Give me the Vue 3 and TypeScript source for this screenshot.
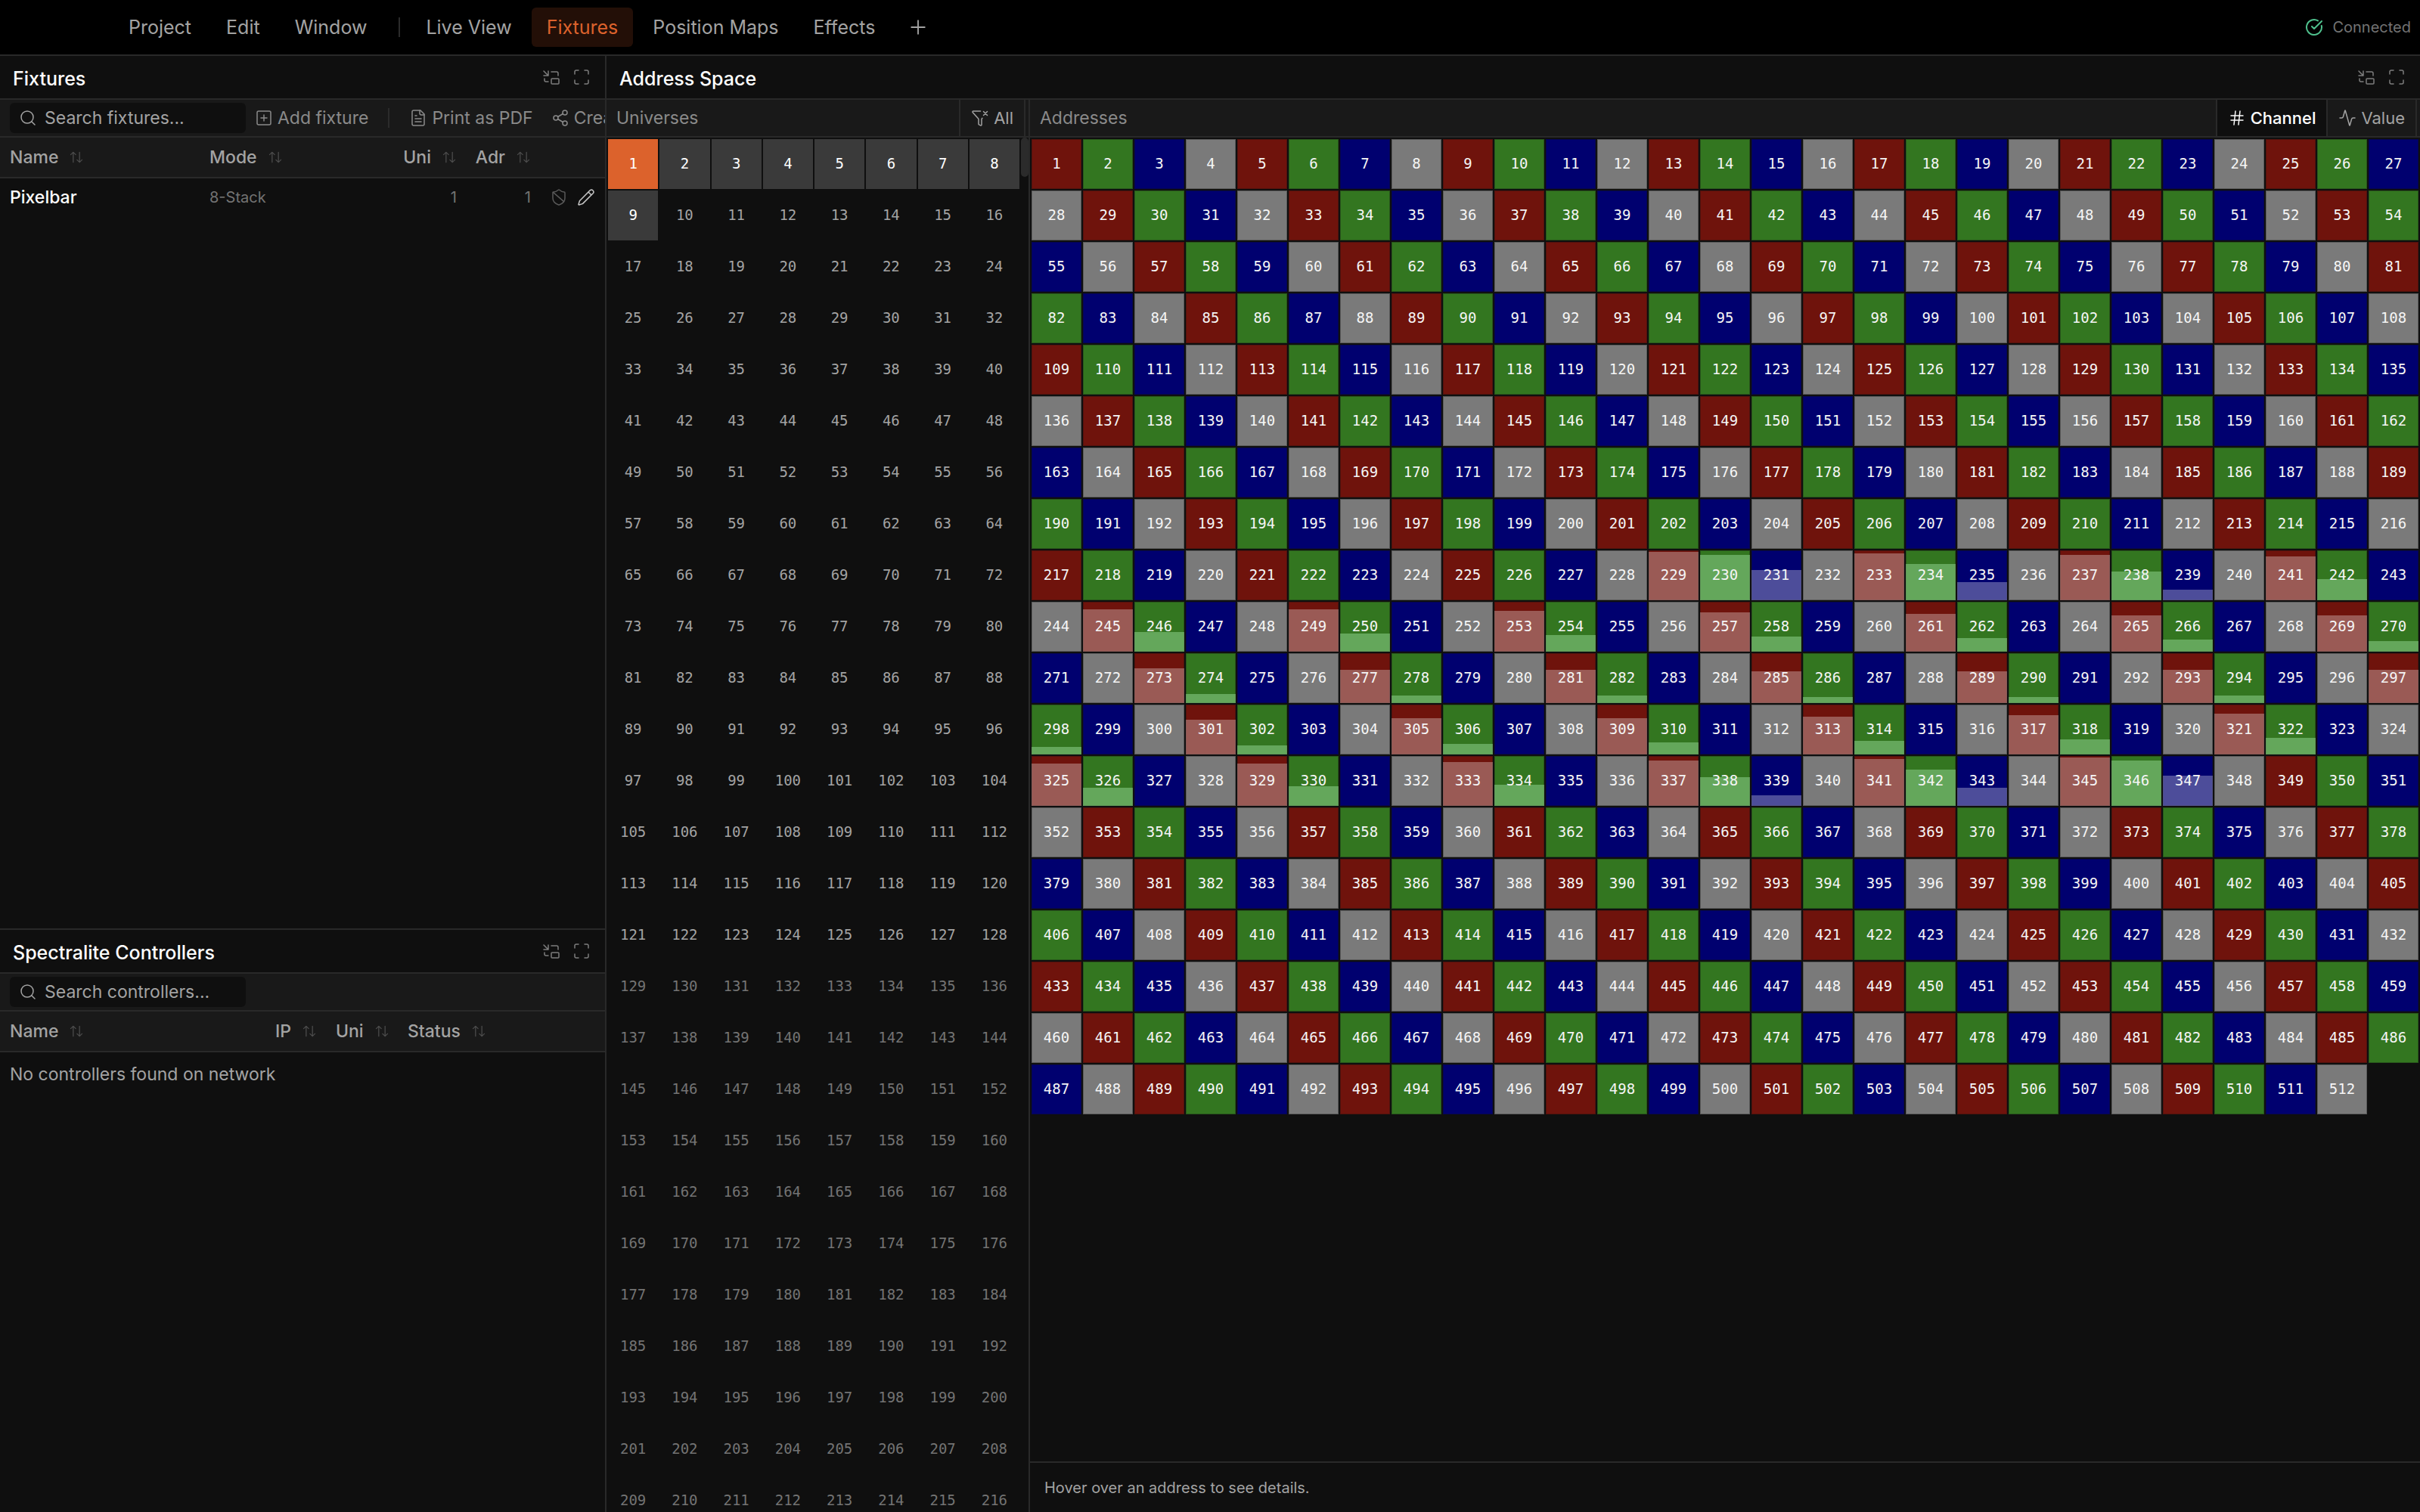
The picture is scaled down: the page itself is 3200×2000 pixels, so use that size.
<script setup lang="ts">
type Cell = { n: number; kind: string; level: number }

const icons: Record<string, string> = {
  detach: '<path d="M2 10h6V4M2 4l6 6M21 10V7a2 2 0 0 0-2-2h-7M3 14v2a2 2 0 0 0 2 2h3"/><rect x="12" y="14" width="10" height="7" rx="1"/>',
  expand: '<path d="M8 3H5a2 2 0 0 0-2 2v3M21 8V5a2 2 0 0 0-2-2h-3M3 16v3a2 2 0 0 0 2 2h3M16 21h3a2 2 0 0 0 2-2v-3"/>',
  search: '<circle cx="11" cy="11" r="8"/><path d="m21 21-4.3-4.3"/>',
  add: '<rect x="3" y="3" width="18" height="18" rx="2"/><path d="M8 12h8M12 8v8"/>',
  file: '<path d="M15 2H6a2 2 0 0 0-2 2v16a2 2 0 0 0 2 2h12a2 2 0 0 0 2-2V7Z"/><path d="M14 2v4a2 2 0 0 0 2 2h4M10 9H8M16 13H8M16 17H8"/>',
  share: '<circle cx="18" cy="5" r="3"/><circle cx="6" cy="12" r="3"/><circle cx="18" cy="19" r="3"/><path d="m8.6 13.5 6.8 4M15.4 6.5l-6.8 4"/>',
  sort: '<path d="M3 8l4-4 4 4M7 4v16M21 16l-4 4-4-4M17 20V4"/>',
  shield: '<path d="M20 13c0 5-3.5 7.5-7.66 8.95a1 1 0 0 1-.67-.01C7.5 20.5 4 18 4 13V6a1 1 0 0 1 1-1c2 0 4.500-1.200 6.240-2.720a1.170 1.170 0 0 1 1.520 0C14.510 3.810 17 5 19 5a1 1 0 0 1 1 1z"/><path d="m4.240 5.210 14.390 12.470"/>',
  pencil: '<path d="M21.170 6.810a2.820 2.820 0 0 0-3.980-3.980L3.840 16.170a2 2 0 0 0-.5.83l-1.320 4.350a.5.5 0 0 0 .62.62l4.350-1.320a2 2 0 0 0 .83-.5zM15 5l4 4"/>',
  filter: '<path d="M12.530 3H3a1 1 0 0 0-.74 1.670l7.220 7.990A2 2 0 0 1 10 14v6a1 1 0 0 0 .55.9l2 1A1 1 0 0 0 14 21v-7a2 2 0 0 1 .52-1.340l.42-.47M16.500 3.500l5 5M21.500 3.500l-5 5"/>',
  hash: '<path d="M4 9h16M4 15h16M10 3 8 21M16 3l-2 18"/>',
  wave: '<path d="M22 12h-2.480a2 2 0 0 0-1.930 1.460l-2.350 8.360a.25.25 0 0 1-.48 0L9.240 2.180a.25.25 0 0 0-.48 0l-2.350 8.360A2 2 0 0 1 4.490 12H2"/>',
  check: '<path d="M21.800 10A10 10 0 1 1 17 3.330M9 11l3 3L22 4"/>',
  plus: '<path d="M5 12h14M12 5v14"/>',
}

const menus = ['Project', 'Edit', 'Window']
const views = ['Live View', 'Fixtures', 'Position Maps', 'Effects']

const universes = Array.from({ length: 216 }, (_, i) => i + 1)
const universeClass = (n: number) =>
  n === 1 ? 'selected' : n <= 9 ? 'used' : n <= 128 ? '' : 'dim'

/* Output level of each live channel, out of 66 steps. */
const levels: Record<number, number> = {
  229: 64, 230: 60, 231: 40, 233: 62, 234: 48, 235: 24, 237: 60, 238: 38, 239: 14, 241: 58, 242: 28,
  245: 56, 246: 26, 249: 56, 250: 24, 253: 54, 254: 22, 257: 52, 258: 20, 261: 50, 262: 18,
  265: 48, 266: 16, 269: 48, 270: 14, 273: 46, 274: 12, 277: 44, 278: 10, 281: 44, 282: 10,
  285: 42, 286: 8, 289: 42, 290: 8, 293: 44, 294: 10, 297: 44, 298: 10, 301: 46, 302: 12,
  305: 48, 306: 14, 309: 48, 310: 16, 313: 50, 314: 18, 317: 52, 318: 20, 321: 54, 322: 22,
  325: 56, 326: 24, 329: 56, 330: 26, 333: 58, 334: 28, 337: 60, 338: 38, 339: 14,
  341: 62, 342: 48, 343: 24, 345: 64, 346: 60, 347: 40,
}
const kinds = ['white', 'red', 'green', 'blue']
const addresses: Cell[] = Array.from({ length: 512 }, (_, i) => ({
  n: i + 1,
  kind: kinds[(i + 1) % 4],
  level: levels[i + 1] ?? 0,
}))
</script>

<template>
  <div class="app">
    <header class="topbar">
      <nav class="menu">
        <button v-for="m in menus" :key="m" class="tab">{{ m }}</button>
        <span class="rule"></span>
        <button v-for="v in views" :key="v" class="tab" :class="{ active: v === 'Fixtures' }">{{ v }}</button>
        <button class="tab plus" aria-label="Add view"><svg class="icon" viewBox="0 0 24 24" v-html="icons.plus"></svg></button>
      </nav>
      <div class="status"><svg class="icon ok" viewBox="0 0 24 24" v-html="icons.check"></svg><span>Connected</span></div>
    </header>

    <main class="workspace">
      <div class="side">
        <section class="panel fixtures">
          <div class="panel-head">
            <h2>Fixtures</h2>
            <button class="tool" aria-label="Detach"><svg class="icon" viewBox="0 0 24 24" v-html="icons.detach"></svg></button>
            <button class="tool" aria-label="Expand"><svg class="icon" viewBox="0 0 24 24" v-html="icons.expand"></svg></button>
          </div>
          <div class="toolbar">
            <label class="search">
              <svg class="icon" viewBox="0 0 24 24" v-html="icons.search"></svg>
              <input type="text" placeholder="Search fixtures..." aria-label="Search fixtures" />
            </label>
            <button class="action"><svg class="icon" viewBox="0 0 24 24" v-html="icons.add"></svg>Add fixture</button>
            <span class="rule"></span>
            <button class="action"><svg class="icon" viewBox="0 0 24 24" v-html="icons.file"></svg>Print as PDF</button>
            <button class="action share"><svg class="icon" viewBox="0 0 24 24" v-html="icons.share"></svg>Create</button>
          </div>
          <table>
            <colgroup><col class="c-name" /><col class="c-mode" /><col class="c-uni" /><col class="c-adr" /><col /></colgroup>
            <thead>
              <tr>
                <th>Name<svg class="sort" viewBox="0 0 24 24" v-html="icons.sort"></svg></th>
                <th>Mode<svg class="sort" viewBox="0 0 24 24" v-html="icons.sort"></svg></th>
                <th class="num">Uni<svg class="sort" viewBox="0 0 24 24" v-html="icons.sort"></svg></th>
                <th class="num">Adr<svg class="sort" viewBox="0 0 24 24" v-html="icons.sort"></svg></th>
                <th></th>
              </tr>
            </thead>
            <tbody>
              <tr>
                <td class="strong">Pixelbar</td>
                <td class="small">8-Stack</td>
                <td class="small num">1</td>
                <td class="small num">1</td>
                <td class="row-icons">
                  <span>
                    <svg class="icon shield" viewBox="0 0 24 24" v-html="icons.shield"></svg>
                    <svg class="icon pencil" viewBox="0 0 24 24" v-html="icons.pencil"></svg>
                  </span>
                </td>
              </tr>
            </tbody>
          </table>
        </section>

        <section class="panel controllers">
          <div class="panel-head">
            <h2>Spectralite Controllers</h2>
            <button class="tool" aria-label="Detach"><svg class="icon" viewBox="0 0 24 24" v-html="icons.detach"></svg></button>
            <button class="tool" aria-label="Expand"><svg class="icon" viewBox="0 0 24 24" v-html="icons.expand"></svg></button>
          </div>
          <div class="toolbar">
            <label class="search">
              <svg class="icon" viewBox="0 0 24 24" v-html="icons.search"></svg>
              <input type="text" placeholder="Search controllers..." aria-label="Search controllers" />
            </label>
          </div>
          <table>
            <colgroup><col class="k-name" /><col class="k-ip" /><col class="k-uni" /><col /></colgroup>
            <thead>
              <tr>
                <th>Name<svg class="sort" viewBox="0 0 24 24" v-html="icons.sort"></svg></th>
                <th>IP<svg class="sort" viewBox="0 0 24 24" v-html="icons.sort"></svg></th>
                <th>Uni<svg class="sort" viewBox="0 0 24 24" v-html="icons.sort"></svg></th>
                <th>Status<svg class="sort" viewBox="0 0 24 24" v-html="icons.sort"></svg></th>
              </tr>
            </thead>
            <tbody>
              <tr><td colspan="4" class="empty">No controllers found on network</td></tr>
            </tbody>
          </table>
        </section>
      </div>

      <section class="panel space">
        <div class="panel-head">
          <h2>Address Space</h2>
          <button class="tool" aria-label="Detach"><svg class="icon" viewBox="0 0 24 24" v-html="icons.detach"></svg></button>
          <button class="tool" aria-label="Expand"><svg class="icon" viewBox="0 0 24 24" v-html="icons.expand"></svg></button>
        </div>
        <div class="columns">
          <div class="universes">
            <div class="toolbar split">
              <span class="label">Universes</span>
              <button class="seg all"><svg class="icon" viewBox="0 0 24 24" v-html="icons.filter"></svg>All</button>
            </div>
            <div class="scroll">
              <div class="grid eight">
                <div v-for="n in universes" :key="n" class="cell" :class="universeClass(n)">{{ n }}</div>
              </div>
              <div class="track"><div class="thumb"></div></div>
            </div>
          </div>
          <div class="addresses">
            <div class="toolbar split">
              <span class="label">Addresses</span>
              <button class="seg on"><svg class="icon" viewBox="0 0 24 24" v-html="icons.hash"></svg>Channel</button>
              <button class="seg"><svg class="icon" viewBox="0 0 24 24" v-html="icons.wave"></svg>Value</button>
            </div>
            <div class="grid many">
              <div v-for="c in addresses" :key="c.n" class="cell addr" :class="c.kind">
                <span v-if="c.level" class="level" :style="{ height: (c.level / 66) * 100 + '%' }"></span>
                <span class="no">{{ c.n }}</span>
              </div>
            </div>
            <footer class="hint">Hover over an address to see details.</footer>
          </div>
        </div>
      </section>
    </main>
  </div>
</template>

<style>
body { background: #0f0f0f; }
</style>

<style scoped>
.app {
  display: flex;
  flex-direction: column;
  height: 100vh;
  overflow: hidden;
  background: #0f0f0f;
  color: #a3a3a3;
  font-family: Inter, "Liberation Sans", sans-serif;
  font-size: 23px;
  line-height: 32px;
}
.app *, .app { box-sizing: border-box; }
button {
  margin: 0;
  border: 0;
  background: none;
  color: inherit;
  font: inherit;
  white-space: nowrap;
}
.icon {
  flex: none;
  width: 24px;
  height: 24px;
}
.icon, .sort {
  fill: none;
  stroke: currentColor;
  stroke-width: 1.5;
  stroke-linecap: round;
  stroke-linejoin: round;
}

.topbar {
  display: flex;
  flex: none;
  align-items: center;
  justify-content: space-between;
  height: 74px;
  padding: 0 12px 0 150px;
  border-bottom: 2px solid #292929;
  background: #000;
}
.menu { display: flex; align-items: center; gap: 6px; font-size: 25px; }
.tab {
  display: flex;
  align-items: center;
  height: 52px;
  padding: 0 20px;
  border-radius: 6px;
}
.tab.active { background: #230f07; color: #dc622c; }
.plus { padding: 0 16px; }
.plus .icon { width: 30px; height: 30px; }
.rule { flex: none; width: 2px; height: 26px; margin: 0 14px; background: #2b2b2b; }
.menu .rule { margin: 0 8px 0 16px; }
.status { display: flex; align-items: center; gap: 12px; color: #737373; font-size: 20px; }
.ok { color: #4fc08d; stroke-width: 2; }

.workspace { display: flex; flex: 1; min-height: 0; }
.side {
  display: flex;
  flex: 0 0 calc(25% + 2px);
  flex-direction: column;
  min-width: 0;
  border-right: 2px solid #292929;
}
.panel { display: flex; flex-direction: column; min-width: 0; min-height: 0; overflow: hidden; }
.fixtures { flex: 3 1 0; }
.controllers { flex: 2 1 0; border-top: 2px solid #292929; }
.space { flex: 1; }
.panel-head {
  display: flex;
  flex: none;
  align-items: center;
  gap: 16px;
  height: 58px;
  padding: 0 19px 0 17px;
  border-bottom: 2px solid #292929;
}
h2 { flex: 1; margin: 0; padding-top: 3px; color: #fff; font-size: 25px; font-weight: 500; }
.tool { display: flex; padding: 0; color: #7d7d7d; }

.toolbar {
  display: flex;
  flex: none;
  align-items: center;
  height: 50px;
  padding: 0 13px;
  border-bottom: 2px solid #292929;
  background: #191919;
}
.search {
  display: flex;
  flex: none;
  align-items: center;
  gap: 10px;
  width: 312px;
  height: 40px;
  padding: 0 12px;
  border-radius: 6px;
  background: #0f0f0f;
}
.search input {
  min-width: 0;
  width: 100%;
  padding: 0;
  border: 0;
  outline: 0;
  background: none;
  color: #fff;
  font: inherit;
}
.search input::placeholder { color: #a3a3a3; opacity: 1; }
.action { display: flex; align-items: center; gap: 6px; padding: 0 12px; color: #8a8a8a; }
.share { padding-right: 0; }

table { width: 100%; border-collapse: collapse; table-layout: fixed; }
th, td { padding: 0 0 0 13px; text-align: left; white-space: nowrap; }
thead tr { height: 53px; border-bottom: 2px solid #292929; background: #191919; }
th { font-weight: 500; }
tbody tr { height: 50px; }
.sort { width: 20px; height: 20px; margin-left: 14px; color: #4d4d4d; vertical-align: -2px; }
.strong { color: #fff; font-weight: 500; }
.small { color: #737373; font-size: 20px; }
.num { padding-left: 0; text-align: right; }
.row-icons { padding: 0 13px 0 0; }
.row-icons span { display: flex; justify-content: flex-end; gap: 12px; }
.shield { color: #5a5a5a; }
.pencil { color: #c8c8c8; }
.c-name { width: 264px; }
.c-mode { width: 200px; }
.c-uni { width: 140px; }
.c-adr { width: 98px; }
.k-name { width: 351px; }
.k-ip { width: 80px; }
.k-uni { width: 95px; }
.empty { height: 58px; }

.columns { display: flex; flex: 1; min-height: 0; }
.universes {
  display: flex;
  flex: none;
  flex-direction: column;
  width: 560px;
  border-right: 2px solid #292929;
}
.addresses { display: flex; flex: 1; flex-direction: column; min-width: 0; }
.split { padding: 0 4px 0 13px; }
.label { flex: 1; color: #8a8a8a; }
.seg {
  display: flex;
  align-items: center;
  gap: 6px;
  height: 48px;
  padding: 0 14px;
  border-left: 2px solid #292929;
  font-size: 22px;
}
.seg:last-child { border-right: 2px solid #292929; }
.seg.on { background: #0f0f0f; color: #fff; font-weight: 500; }

.scroll { display: flex; flex: 1; min-height: 0; overflow: hidden; }
.grid {
  display: grid;
  grid-auto-rows: 66px;
  align-content: start;
  gap: 2px;
  padding: 2px;
  font-family: "DejaVu Sans Mono", "Liberation Mono", monospace;
  font-size: 19px;
}
.eight { flex: 1; grid-template-columns: repeat(8, 1fr); }
.many { flex: 1; grid-template-columns: repeat(27, 1fr); }
.cell { display: flex; align-items: center; justify-content: center; padding-bottom: 3px; }
.dim { color: #737373; }
.used { background: #3a3a3a; color: #fff; }
.selected { background: #dc622c; color: #fff; }
.addr { position: relative; box-shadow: inset 0 0 0 1px rgba(15, 15, 15, 0.3); color: #f5f5f5; }
.red { background: #6f130c; }
.green { background: #337620; }
.blue { background: #00006f; }
.white { background: #7a7a7a; }
.level { position: absolute; right: 0; bottom: 0; left: 0; background: rgba(255, 255, 255, 0.3); }
.green .level { background: rgba(150, 215, 150, 0.5); }
.no { position: relative; }
.track { flex: none; width: 10px; }
.thumb { height: 52px; border-radius: 5px; background: #2b2b2b; }
.hint {
  flex: none;
  height: 67px;
  padding: 17px 19px;
  border-top: 2px solid #292929;
  font-size: 20px;
}
</style>
